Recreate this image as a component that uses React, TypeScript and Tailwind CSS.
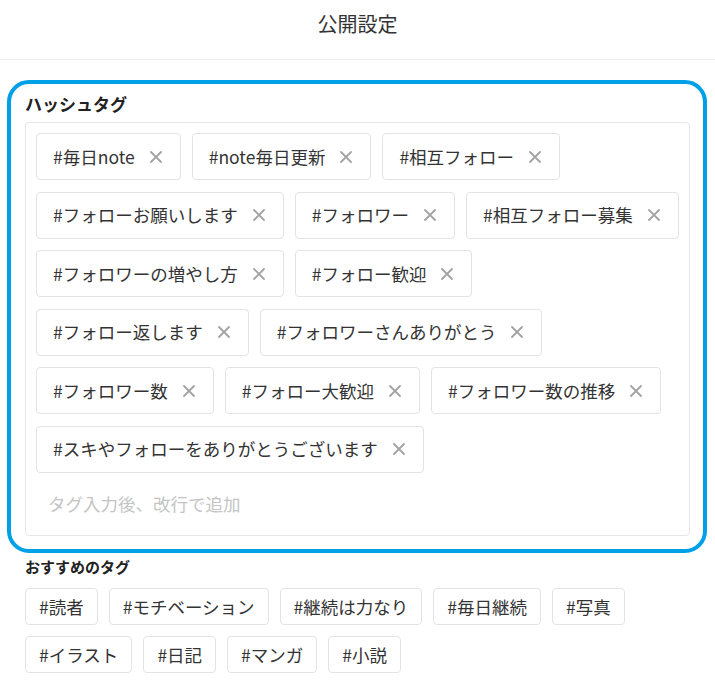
import React from "react";

const tags = [
  "#毎日note",
  "#note毎日更新",
  "#相互フォロー",
  "#フォローお願いします",
  "#フォロワー",
  "#相互フォロー募集",
  "#フォロワーの増やし方",
  "#フォロー歓迎",
  "#フォロー返します",
  "#フォロワーさんありがとう",
  "#フォロワー数",
  "#フォロー大歓迎",
  "#フォロワー数の推移",
  "#スキやフォローをありがとうございます",
];

const suggested = [
  "#読者",
  "#モチベーション",
  "#継続は力なり",
  "#毎日継続",
  "#写真",
  "#イラスト",
  "#日記",
  "#マンガ",
  "#小説",
];

function XIcon() {
  return (
    <svg width="12" height="12" viewBox="0 0 12 12" className="shrink-0">
      <path d="M1 1L11 11M11 1L1 11" stroke="#a3a3a3" strokeWidth="1.8" strokeLinecap="round" />
    </svg>
  );
}

export default function App() {
  return (
    <div className="w-[715px] min-h-[694px] bg-white text-[#333333] font-['Noto_Sans_CJK_JP','Noto_Sans',sans-serif]">
      <header className="h-[60px] border-b border-[#eeeeee] pt-[12px] text-center">
        <h1 className="text-[20px] leading-[24px] font-normal text-[#333333]">公開設定</h1>
      </header>

      <div className="px-[25px] pt-[32px]">
        <section className="relative">
          <div className="pointer-events-none absolute -top-[12px] -bottom-[17px] -left-[18px] -right-[17px] rounded-[22px] border-[4px] border-[#00a0e9]" />
          <h2 className="text-[17px] leading-[24px] font-bold text-[#222222]">ハッシュタグ</h2>
          <div className="mt-[6px] rounded-[4px] border border-[#e6e6e6] p-[10px]">
            <div className="flex flex-wrap gap-x-[11px] gap-y-[11.5px]">
              {tags.map((t) => (
                <div
                  key={t}
                  className="flex h-[47px] items-center rounded-[4px] border border-[#e3e3e3] pl-[16px] pr-[18px]"
                >
                  <span className="text-[17.5px] leading-none whitespace-nowrap">{t}</span>
                  <span className="ml-[15px] flex items-center">
                    <XIcon />
                  </span>
                </div>
              ))}
              <div className="flex h-[41px] w-full items-center pl-[12px] text-[17.5px] text-[#c4c4c4]">
                タグ入力後、改行で追加
              </div>
            </div>
          </div>
        </section>

        <section className="mt-[20px]">
          <h2 className="text-[15px] leading-[22px] font-bold text-[#222222]">おすすめのタグ</h2>
          <div className="mt-[10px] flex flex-wrap gap-[11px]">
            {suggested.map((t) => (
              <div
                key={t}
                className="flex h-[37px] items-center rounded-[4px] border border-[#e3e3e3] px-[13px] text-[17.5px] leading-none whitespace-nowrap"
              >
                {t}
              </div>
            ))}
          </div>
        </section>
      </div>
    </div>
  );
}
